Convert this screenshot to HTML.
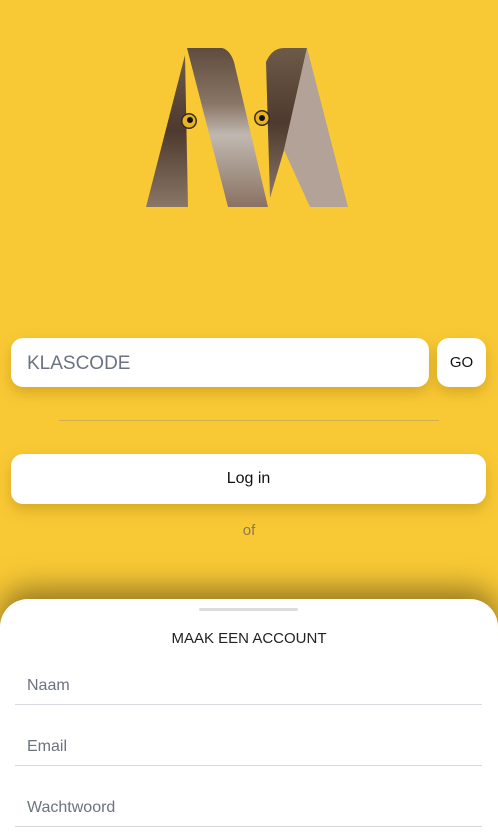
<!DOCTYPE html>
<html><head><meta charset="utf-8"><style>
*{margin:0;padding:0;box-sizing:border-box}
body{width:498px;height:825px;overflow:hidden;background:#F9C935;font-family:"Liberation Sans",sans-serif;position:relative}
.in{position:absolute;background:#fff;border-radius:12px;box-shadow:0 6px 14px rgba(150,110,0,.35)}
.sheet{position:absolute;left:0;top:599px;width:498px;height:240px;background:#fff;border-radius:28px 28px 0 0;box-shadow:0 -10px 30px rgba(60,50,20,.55)}
.f{position:absolute;left:15px;width:467px;border-bottom:1px solid #d6dae0;height:40px;color:#6b7280;font-size:16px;padding-left:12px}
</style></head><body>
<svg style="position:absolute;left:0;top:0" width="498" height="230">
<defs>
<linearGradient id="g1" x1="0" y1="0" x2="0" y2="1"><stop offset="0" stop-color="#6e5a48"/><stop offset=".5" stop-color="#4e3a2e"/><stop offset="1" stop-color="#8a7666"/></linearGradient>
<linearGradient id="g2" x1="0" y1="0" x2="0" y2="1"><stop offset="0" stop-color="#5e4c3e"/><stop offset=".35" stop-color="#8a7666"/><stop offset=".55" stop-color="#c0b8b0"/><stop offset="1" stop-color="#8a7262"/></linearGradient>
</defs>
<path d="M185 55 L188 207 L146 207 Z" fill="url(#g1)"/>
<path d="M187 48 L222 48 Q230 50 234 62 L268 207 L228 207 Z" fill="url(#g2)"/>
<path d="M266 62 Q272 48 284 48 L307 48 L284 150 L270 198 Z" fill="url(#g1)"/>
<path d="M307 48 L348 207 L310 207 L284 150 Z" fill="#b3a297"/>
<circle cx="189" cy="121" r="8" fill="#3a2a20"/><circle cx="189" cy="121" r="6.5" fill="#e8b320"/><circle cx="190" cy="120" r="3" fill="#111"/>
<circle cx="262" cy="118" r="8" fill="#3a2a20"/><circle cx="262" cy="118" r="6.5" fill="#e8b320"/><circle cx="262" cy="118" r="3" fill="#111"/>
</svg>
<div class="in" style="left:11px;top:338px;width:418px;height:49px;padding:15px 16px;font-size:19px;color:#6b7280">KLASCODE</div>
<div class="in" style="left:437px;top:338px;width:49px;height:49px;text-align:center;line-height:50px;font-size:15px;color:#111">GO</div>
<div style="position:absolute;left:59px;top:420px;width:380px;height:1px;background:#cfae50"></div>
<div class="in" style="left:11px;top:454px;width:475px;height:50px;text-align:center;line-height:50px;font-size:16px;color:#111">Log in</div>
<div style="position:absolute;left:0;width:498px;top:522px;text-align:center;font-size:15px;color:#8a7a50">of</div>
<div class="sheet">
<div style="position:absolute;left:199px;top:9px;width:99px;height:3px;border-radius:2px;background:#dcdcdc"></div>
<div style="position:absolute;left:0;width:498px;top:31px;text-align:center;font-size:15px;color:#222">MAAK EEN ACCOUNT</div>
<div class="f" style="top:66px;padding-top:12px">Naam</div>
<div class="f" style="top:127px;padding-top:12px">Email</div>
<div class="f" style="top:188px;padding-top:12px">Wachtwoord</div>
</div>
</body></html>
